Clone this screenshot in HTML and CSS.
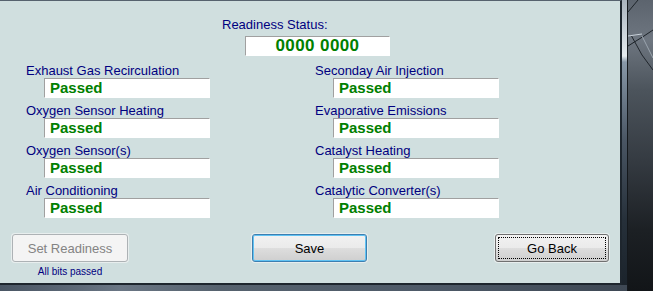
FILE: index.html
```html
<!DOCTYPE html>
<html lang="en">
<head>
    <meta charset="UTF-8">
    <title>Readiness Status</title>
    <link rel="stylesheet" href="styles.css">
</head>
<body>

<div class="desk">
    <div class="frame">
        <div class="panel">
            <!-- Status header -->
            <div class="status">
                <div class="label">Readiness Status:</div>
                <div class="status-box">0000 0000</div>
            </div>

            <!-- Monitors -->
            <div class="monitors">
                <div class="field">
                    <div class="label">Exhaust Gas Recirculation</div>
                    <div class="value">Passed</div>
                </div>
                <div class="field">
                    <div class="label">Seconday Air Injection</div>
                    <div class="value">Passed</div>
                </div>
                <div class="field">
                    <div class="label">Oxygen Sensor Heating</div>
                    <div class="value">Passed</div>
                </div>
                <div class="field">
                    <div class="label">Evaporative Emissions</div>
                    <div class="value">Passed</div>
                </div>
                <div class="field">
                    <div class="label">Oxygen Sensor(s)</div>
                    <div class="value">Passed</div>
                </div>
                <div class="field">
                    <div class="label">Catalyst Heating</div>
                    <div class="value">Passed</div>
                </div>
                <div class="field">
                    <div class="label">Air Conditioning</div>
                    <div class="value">Passed</div>
                </div>
                <div class="field">
                    <div class="label">Catalytic Converter(s)</div>
                    <div class="value">Passed</div>
                </div>
            </div>

            <!-- Buttons -->
            <div class="actions">
                <div class="set-col">
                    <button class="button" disabled>Set Readiness</button>
                    <div class="note">All bits passed</div>
                </div>
                <button class="button save">Save</button>
                <button class="button back"><span>Go Back</span></button>
            </div>
        </div>
        <div class="bottom-bar"></div>
    </div>
    <div class="wall">
        <svg width="25" height="291" viewBox="0 0 25 291">
            <polyline points="0,12 10,0" fill="none" stroke="#1e242a" stroke-width="1"/>
            <polyline points="0,46 16,36 25,30" fill="none" stroke="#1c2228" stroke-width="1"/>
            <polyline points="3,35 14,55 25,70" fill="none" stroke="#20262c" stroke-width="1"/>
            <polyline points="0,36 14,34" fill="none" stroke="#c8d0d8" stroke-width="1"/>
            <polyline points="14,36 25,58" fill="none" stroke="#9aa4ae" stroke-width="1"/>
        </svg>
    </div>
</div>

</body>
</html>
```

FILE: styles.css
```css
body {
    margin: 0;
    padding: 0;
    font-family: "Liberation Sans", Arial, sans-serif;
    background-color: #1a1e22;
    overflow: hidden;
}

.desk {
    display: flex;
    height: 291px;
}

/* window frame around the panel */
.frame {
    width: 628px;
    height: 291px;
    box-sizing: border-box;
    border-right: 1px solid #14181c;
    background: linear-gradient(to bottom, #aab4be 0px, #e6ecf0 56px, #8898a8 62px, #4a5664 140px, #26303a 220px, #1a222a 291px);
    display: flex;
    flex-direction: column;
}

.panel {
    width: 622px;
    height: 285px;
    box-sizing: border-box;
    background-color: #d0dfdf;
    border-top: 1px solid #56626e;
    border-right: 2px solid #1e262e;
    border-bottom: 2px solid #1e262e;
    padding-top: 16px;
}

.bottom-bar {
    width: 627px;
    height: 6px;
    background: linear-gradient(to right, #4a5664 0px, #5e6a78 80px, #6a7684 120px, #56626e 220px, #4e5a68 420px, #3e4854 627px);
}

.wall {
    flex: 1;
    background: linear-gradient(to bottom, #5c646e 0px, #6e7680 40px, #4c545c 90px, #353b42 160px, #1c2024 230px, #121518 291px);
}

.wall svg {
    display: block;
}

.label {
    font-size: 13px;
    line-height: 15px;
    color: #000080;
    white-space: nowrap;
}

.status {
    padding-left: 222px;
}

.status-box {
    width: 145px;
    height: 20px;
    box-sizing: border-box;
    margin: 4px 0 0 23px;
    background-color: #fff;
    border: 1px solid #fff;
    border-top-color: #a0a0a0;
    border-left-color: #a0a0a0;
    color: #008000;
    font-weight: bold;
    font-size: 17px;
    line-height: 18px;
    letter-spacing: 0.4px;
    text-align: center;
}

.monitors {
    display: grid;
    grid-template-columns: 289px 1fr;
    row-gap: 5px;
    padding-left: 26px;
    margin-top: 7px;
}

.value {
    width: 166px;
    height: 20px;
    box-sizing: border-box;
    margin-left: 18px;
    padding-left: 5px;
    background-color: #fff;
    border: 1px solid #fff;
    border-top-color: #a0a0a0;
    border-left-color: #a0a0a0;
    color: #008000;
    font-weight: bold;
    font-size: 15px;
    line-height: 18px;
}

.actions {
    display: flex;
    align-items: flex-start;
    margin-top: 16px;
    padding-left: 12px;
}

.set-col {
    display: flex;
    flex-direction: column;
    align-items: center;
}

.button {
    width: 115px;
    height: 28px;
    box-sizing: border-box;
    font-family: "Liberation Sans", Arial, sans-serif;
    font-size: 13px;
    color: #000;
    background: linear-gradient(to bottom, #f2f2f2 0%, #ebebeb 48%, #dddddd 52%, #cfcfcf 100%);
    border: 1px solid #707070;
    border-radius: 3px;
    box-shadow: 0 0 0 1px #e8eeee;
    padding: 0;
    cursor: pointer;
}

.button:disabled {
    width: 116px;
    color: #838383;
    background: #f4f4f4;
    border-color: #adb2b5;
    cursor: default;
}

.note {
    font-size: 10px;
    line-height: 12px;
    color: #000080;
    margin-top: 4px;
}

.button.save {
    margin-left: 124px;
    border: 1px solid #3c7fb1;
    box-shadow: inset 0 0 0 1px #61c3f3, 0 0 0 1px #e8eeee;
}

.button.back {
    width: 114px;
    margin-left: 128px;
    padding: 2px;
}

.button.back span {
    display: flex;
    align-items: center;
    justify-content: center;
    height: 100%;
    border: 1px dotted #000;
    box-sizing: border-box;
}
```
